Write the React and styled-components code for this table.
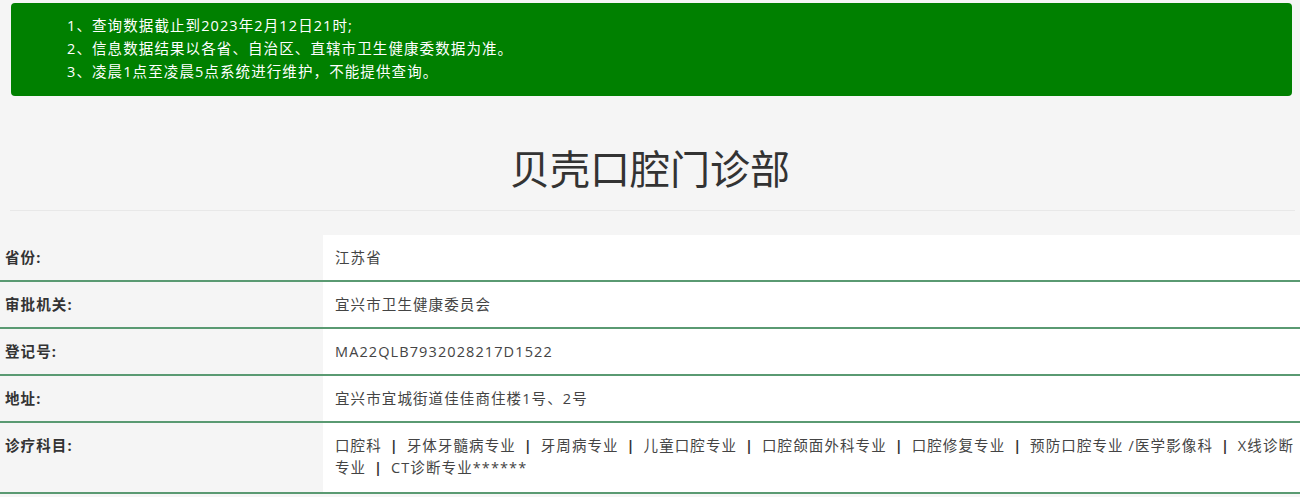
import React from 'react'
import styled, { createGlobalStyle } from 'styled-components'

const GlobalStyle = createGlobalStyle`
  html, body {
    margin: 0;
    padding: 0;
    background: #f5f5f5;
  }
  body {
    font-family: 'Open Sans', 'Noto Sans CJK SC', sans-serif;
    color: #333;
  }
`

const Page = styled.div`
  width: 1300px;
  padding-top: 3px;
`

const Notice = styled.div`
  margin: 0 8px 0 11px;
  height: 93px;
  box-sizing: border-box;
  padding: 11px 0 0 56px;
  background: #008000;
  border-radius: 4px;
  color: #fff;
  font-size: 14.5px;
  letter-spacing: 1.1px;
  line-height: 23px;
`

const NoticeLine = styled.div`
  white-space: nowrap;
`

const Title = styled.h1`
  margin: 51px 0 19px;
  text-align: center;
  font-size: 40px;
  line-height: 44px;
  font-weight: 400;
  color: #333;
`

const Rule = styled.hr`
  margin: 0 5px 24px 10px;
  border: 0;
  border-top: 1px solid #e8e8e8;
  height: 0;
`

const Table = styled.div`
  display: grid;
  grid-template-columns: 323px 1fr;
`

const Label = styled.div`
  padding: 12px 0 11px 5px;
  font-size: 14.5px;
  letter-spacing: 1.1px;
  line-height: 22px;
  font-weight: 700;
  color: #333;
  border-bottom: 2px solid #5a9a72;
`

const Value = styled.div`
  padding: ${p => (p.tall ? '12px 4px 13px 12px' : '12px 4px 11px 12px')};
  background: #fff;
  font-size: 14.5px;
  letter-spacing: ${p => (p.mono ? '1.1px' : '1.1px')};
  line-height: 22px;
  color: #444;
  border-bottom: 2px solid #5a9a72;
`

const Item = styled.span`
  white-space: nowrap;
`

const Sep = styled.span`
  font-weight: 700;
  margin: 0 3px;
  color: #333;
`

const subjects = [
  ['口腔科'],
  ['牙体牙髓病专业'],
  ['牙周病专业'],
  ['儿童口腔专业'],
  ['口腔颌面外科专业'],
  ['口腔修复专业'],
  ['预防口腔专业 /医学影像科'],
  ['X线诊断', '专业'],
  ['CT诊断专业******']
]

const rows = [
  { label: '省份:', value: '江苏省' },
  { label: '审批机关:', value: '宜兴市卫生健康委员会' },
  { label: '登记号:', value: 'MA22QLB7932028217D1522', mono: true },
  { label: '地址:', value: '宜兴市宜城街道佳佳商住楼1号、2号' }
]

export default function App() {
  return (
    <Page>
      <GlobalStyle />
      <Notice>
        <NoticeLine>1、查询数据截止到2023年2月12日21时;</NoticeLine>
        <NoticeLine>2、信息数据结果以各省、自治区、直辖市卫生健康委数据为准。</NoticeLine>
        <NoticeLine>3、凌晨1点至凌晨5点系统进行维护，不能提供查询。</NoticeLine>
      </Notice>
      <Title>贝壳口腔门诊部</Title>
      <Rule />
      <Table>
        {rows.map(r => (
          <React.Fragment key={r.label}>
            <Label>{r.label}</Label>
            <Value mono={r.mono}>{r.value}</Value>
          </React.Fragment>
        ))}
        <Label>诊疗科目:</Label>
        <Value tall>
          {subjects.map((parts, i) => (
            <React.Fragment key={parts.join('')}>
              {i > 0 && <> <Sep>|</Sep> </>}
              {parts.map(p => (
                <Item key={p}>{p}</Item>
              ))}
            </React.Fragment>
          ))}
        </Value>
      </Table>
    </Page>
  )
}
